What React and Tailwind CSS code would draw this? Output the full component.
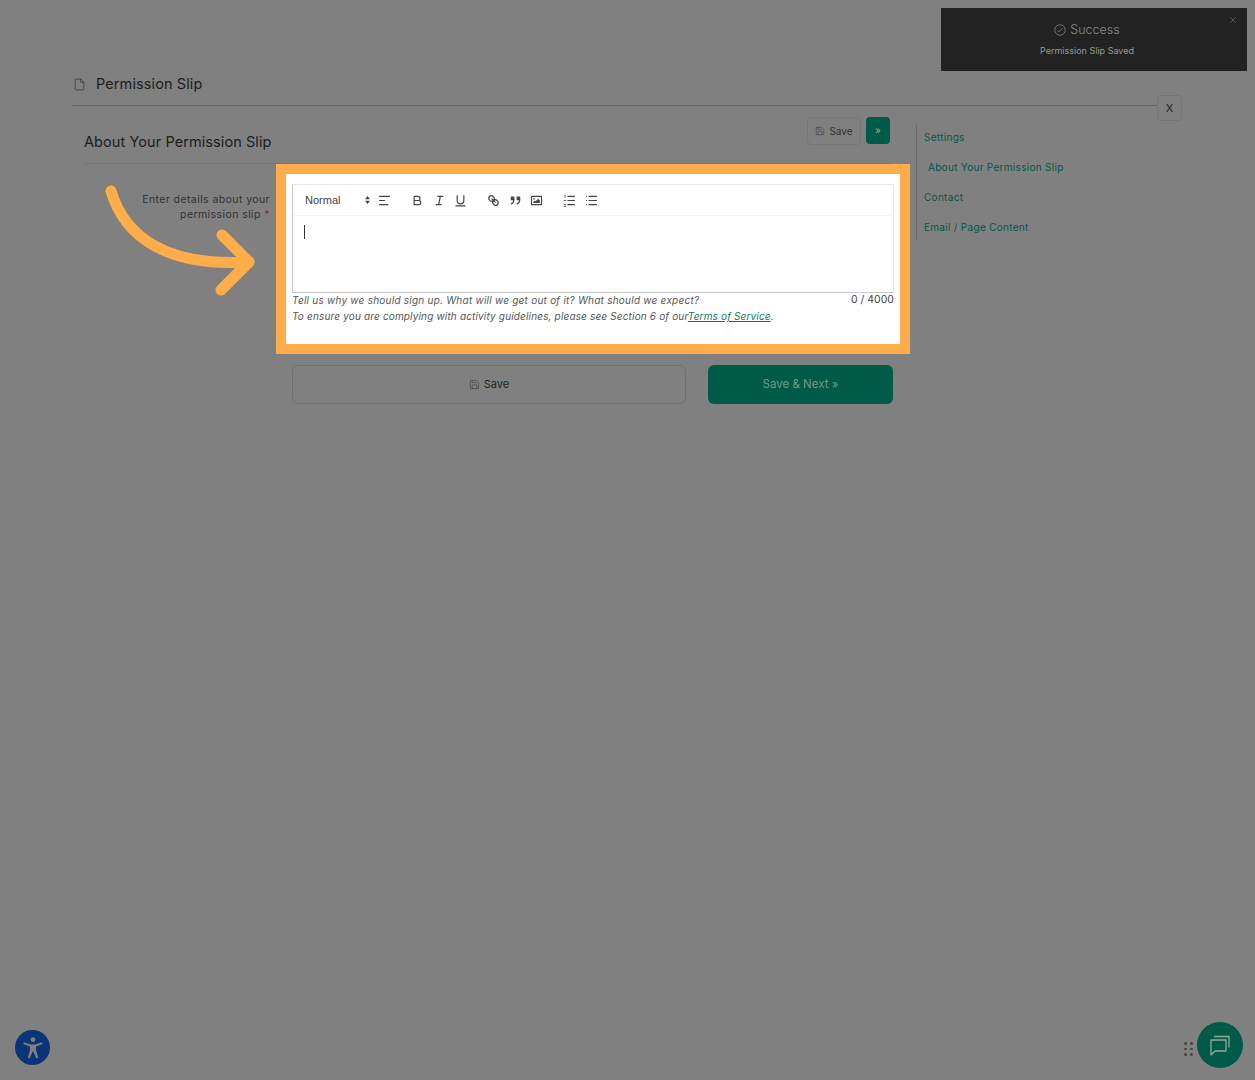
import { File, Save, X } from 'lucide-react'

const sans = "font-['Inter','Noto_Sans',sans-serif]"

function ToolIcon({ children }) {
  return (
    <span className="w-[21.7px] h-6 flex items-center justify-center">
      <svg viewBox="0 0 18 18" className="w-[15px] h-[15px] text-[#444]" fill="none" stroke="currentColor" strokeWidth="1.4" strokeLinecap="round" strokeLinejoin="round">
        {children}
      </svg>
    </span>
  )
}

function Toolbar() {
  return (
    <div className="h-[31px] flex items-center pl-[5px] border-b border-[#f4f4f4]">
      {/* Heading picker */}
      <div className="w-[76px] flex items-center justify-between pl-[7px] pr-1 font-['Liberation_Sans',sans-serif] text-[11px] font-medium text-[#444]">
        <span>Normal</span>
        <svg viewBox="0 0 6 10" className="w-[5px] h-[8px] fill-[#444]">
          <path d="M3 0 6 4H0ZM3 10 0 6h6Z" />
        </svg>
      </div>
      <ToolIcon>
        <line x1="3" x2="15" y1="4" y2="4" />
        <line x1="3" x2="9" y1="9" y2="9" />
        <line x1="3" x2="13" y1="14" y2="14" />
      </ToolIcon>
      <div className="flex ml-[11px]">
        <ToolIcon>
          <path d="M5 4h4.5a2.5 2.5 0 0 1 0 5H5Z" />
          <path d="M5 9h5.5a2.5 2.5 0 0 1 0 5H5Z" />
        </ToolIcon>
        <ToolIcon>
          <line x1="7" x2="13" y1="4" y2="4" />
          <line x1="5" x2="11" y1="14" y2="14" />
          <line x1="8" x2="10" y1="14" y2="4" />
        </ToolIcon>
        <ToolIcon>
          <path d="M5 3v6a4 4 0 0 0 4 4 4 4 0 0 0 4-4V3" />
          <line x1="3.5" x2="14.5" y1="15.5" y2="15.5" />
        </ToolIcon>
      </div>
      <div className="flex ml-[11px]">
        <ToolIcon>
          <line x1="7" x2="11" y1="7" y2="11" />
          <path d="M8.9 4.577a3.476 3.476 0 0 1 .36 4.679A3.476 3.476 0 0 1 4.577 8.9C3.185 7.5 2.035 6.4 4.217 4.217S7.5 3.185 8.9 4.577Z" />
          <path d="M13.423 9.1a3.476 3.476 0 0 0-4.679-.36 3.476 3.476 0 0 0 .36 4.679c1.392 1.392 2.5 2.542 4.679.36S14.815 10.5 13.423 9.1Z" />
        </ToolIcon>
        <ToolIcon>
          <rect x="4" y="5" width="3" height="3" fill="currentColor" />
          <rect x="11" y="5" width="3" height="3" fill="currentColor" />
          <path d="M7 8c0 4.031-3 5-3 5" />
          <path d="M14 8c0 4.031-3 5-3 5" />
        </ToolIcon>
        <ToolIcon>
          <rect x="3" y="4" width="12" height="10" />
          <circle cx="6" cy="7" r="1" fill="currentColor" stroke="none" />
          <polyline points="5 12 5 11 7 9 8 10 11 7 13 9 13 12 5 12" fill="currentColor" stroke="none" />
        </ToolIcon>
      </div>
      <div className="flex ml-[11px]">
        <ToolIcon>
          <line x1="7" x2="15" y1="4" y2="4" />
          <line x1="7" x2="15" y1="9" y2="9" />
          <line x1="7" x2="15" y1="14" y2="14" />
          <g strokeWidth="1">
            <line x1="3.5" x2="3.5" y1="2.5" y2="5.5" />
            <line x1="2.5" x2="4.5" y1="9" y2="9" />
            <line x1="2.5" x2="4.5" y1="14" y2="14" />
            <line x1="2.5" x2="4.5" y1="16" y2="16" />
          </g>
        </ToolIcon>
        <ToolIcon>
          <line x1="6" x2="15" y1="4" y2="4" />
          <line x1="6" x2="15" y1="9" y2="9" />
          <line x1="6" x2="15" y1="14" y2="14" />
          <line x1="3" x2="3" y1="4" y2="4" />
          <line x1="3" x2="3" y1="9" y2="9" />
          <line x1="3" x2="3" y1="14" y2="14" />
        </ToolIcon>
      </div>
    </div>
  )
}

function Editor() {
  return (
    <div className="border-[10px] border-[#ffad4a] bg-white pt-[10px] px-[6px] h-[190px]">
      <div className="border border-[#e8e8e8] border-b-[#c8c8c8] border-l-[#c8c8c8] h-[109px] w-[602px]">
        <Toolbar />
        <div className="pl-[11px] pt-[9px]">
          <div className="w-px h-[14px] bg-[#333]" />
        </div>
      </div>
      <div className="flex justify-between w-[602px] text-[10px] text-[#555]">
        <p className="italic leading-[14px] tracking-[0.24px]">Tell us why we should sign up. What will we get out of it? What should we expect?</p>
        <span className="text-[10.5px] leading-[14px] text-[#444]">0 / 4000</span>
      </div>
      <p className="italic text-[10px] text-[#555] leading-[14px] tracking-[0.16px] mt-[2px] whitespace-nowrap">
        To ensure you are complying with activity guidelines, please see Section 6 of our
        <a className="text-[#0a7a5e] underline">Terms of Service</a>.
      </p>
    </div>
  )
}

export default function App() {
  return (
    <div className={`relative h-[1080px] overflow-hidden bg-[#808080] text-[#222] ${sans}`}>
      {/* Page header */}
      <div className="pt-[72px] pl-[72px]">
        <div className="w-[1085px] h-[34px] flex items-center border-b border-[#666] pb-[9px] pl-[1px]">
          <File className="w-[13px] h-[13px] text-[#333]" strokeWidth={1.3} />
          <h1 className="ml-[10px] text-[14.5px] tracking-[0.1px] text-[#1c1c1c]">Permission Slip</h1>
        </div>

        <div className="flex">
          {/* Form column */}
          <div className="w-[844px] pl-3">
            <div className="h-[58px] flex items-start border-b border-[#757575] mr-[26px] pt-[11px]">
              <h2 className="text-[14.5px] tracking-[0.08px] text-[#1c1c1c] mt-[14px]">About Your Permission Slip</h2>
              <div className="ml-auto flex gap-[5px]">
                <button className="w-[54px] h-7 border border-[#777] rounded flex items-center justify-center gap-1 text-[10px] text-[#333]">
                  <Save className="w-[10px] h-[10px] text-[#444]" strokeWidth={1.5} />
                  Save
                </button>
                <button className="w-6 h-[27px] bg-[#005a48] rounded text-[10px] text-[#8fb0a6]">»</button>
              </div>
            </div>

            <div className="flex">
              <div className="w-[186px] pt-[28px] text-right text-[10.5px] leading-[15px] text-[#333] tracking-[0.42px]">
                Enter details about your
                <br />
                permission slip <span className="text-[#7a2c2c]">*</span>
              </div>
              <div className="ml-[6px]">
                <Editor />
                <div className="flex ml-4 mt-[11px] w-[601px] justify-between">
                  <button className="w-[394px] h-[39px] border border-[#707070] rounded-md flex items-center justify-center gap-1 text-[11px] text-[#222]">
                    <Save className="w-[11px] h-[11px] text-[#444]" strokeWidth={1.5} />
                    Save
                  </button>
                  <button className="w-[185px] h-[39px] bg-[#005a48] rounded-md text-[11.5px] text-[#6f9a8e]">Save &amp; Next »</button>
                </div>
              </div>
            </div>
          </div>

          {/* Section nav */}
          <nav className="mt-[18px] h-[116px] border-l border-[#6c6c6c] pl-[7px] flex flex-col gap-[15px] pt-[6px] text-[10px] leading-[15px] tracking-[0.3px] text-[#005a48]">
            <a>Settings</a>
            <a className="pl-1">About Your Permission Slip</a>
            <a>Contact</a>
            <a>Email / Page Content</a>
          </nav>
        </div>
      </div>

      {/* Close tab */}
      <button className="absolute left-[1157px] top-[95px] w-[25px] h-[26px] border border-[#757575] rounded text-[11px] text-[#222] flex items-center justify-center">X</button>

      {/* Callout arrow */}
      <svg className="absolute left-[100px] top-[180px] w-[165px] h-[120px]" viewBox="0 0 165 120" fill="none" stroke="#ffad4a" strokeWidth="11" strokeLinecap="round" strokeLinejoin="round">
        <path d="M11 11C25 58 68 87 149 82" />
        <path d="M122 55 149 82 121 110" />
      </svg>

      {/* Toast */}
      <div className="absolute left-[941px] top-[8px] w-[306px] h-[63px] bg-[#222] text-[#8a8a8a] pr-[14px] flex flex-col items-center">
        <X className="absolute right-[9px] top-[7px] w-[10px] h-[10px] text-[#8a8a8a]" strokeWidth={1.2} />
        <div className="flex items-center gap-[4px] mt-[13px]">
          <svg viewBox="0 0 24 24" className="w-3 h-3" fill="none" stroke="currentColor" strokeWidth="1.5">
            <circle cx="12" cy="12" r="10.5" />
            <path d="M7.5 12.5 10.5 15.5 16.5 9" />
          </svg>
          <span className="text-[12.5px] font-light leading-[17px]">Success</span>
        </div>
        <p className="mt-[7px] text-[9px] leading-3 text-[#999]">Permission Slip Saved</p>
      </div>

      {/* Accessibility widget */}
      <div className="absolute left-[15px] top-[1030px] w-[35px] h-[35px] rounded-full bg-[#0a3478] flex items-center justify-center">
        <svg viewBox="0 0 24 24" className="w-[26px] h-[26px]" fill="#808080">
          <circle cx="12" cy="4.2" r="2.2" />
          <path d="M3.6 6.7 3 8.4l6.2 2.1v3.6L7.2 21l1.8.6 2.6-6.3h.8l2.6 6.3 1.8-.6-2-6.9v-3.6L21 8.4l-.6-1.7-6.2 2h-4.4Z" />
        </svg>
      </div>

      {/* Chat widget */}
      <div className="absolute left-[1184px] top-[1042px] grid grid-cols-2 gap-x-[3.5px] gap-y-[3px]">
        {[0, 1, 2, 3, 4, 5].map((i) => (
          <span key={i} className="w-[2.5px] h-[2.5px] rounded-full bg-[#444]" />
        ))}
      </div>
      <div className="absolute left-[1197px] top-[1022px] w-[46px] h-[46px] rounded-full bg-[#005a48] flex items-center justify-center">
        <svg viewBox="0 0 24 24" className="w-[24px] h-[24px]" fill="none" stroke="#8fa89f" strokeWidth="1.3" strokeLinejoin="round">
          <path d="M3 7h15v11H7l-4 4Z" />
          <path d="M6 3.5h15v11" />
        </svg>
      </div>
    </div>
  )
}
